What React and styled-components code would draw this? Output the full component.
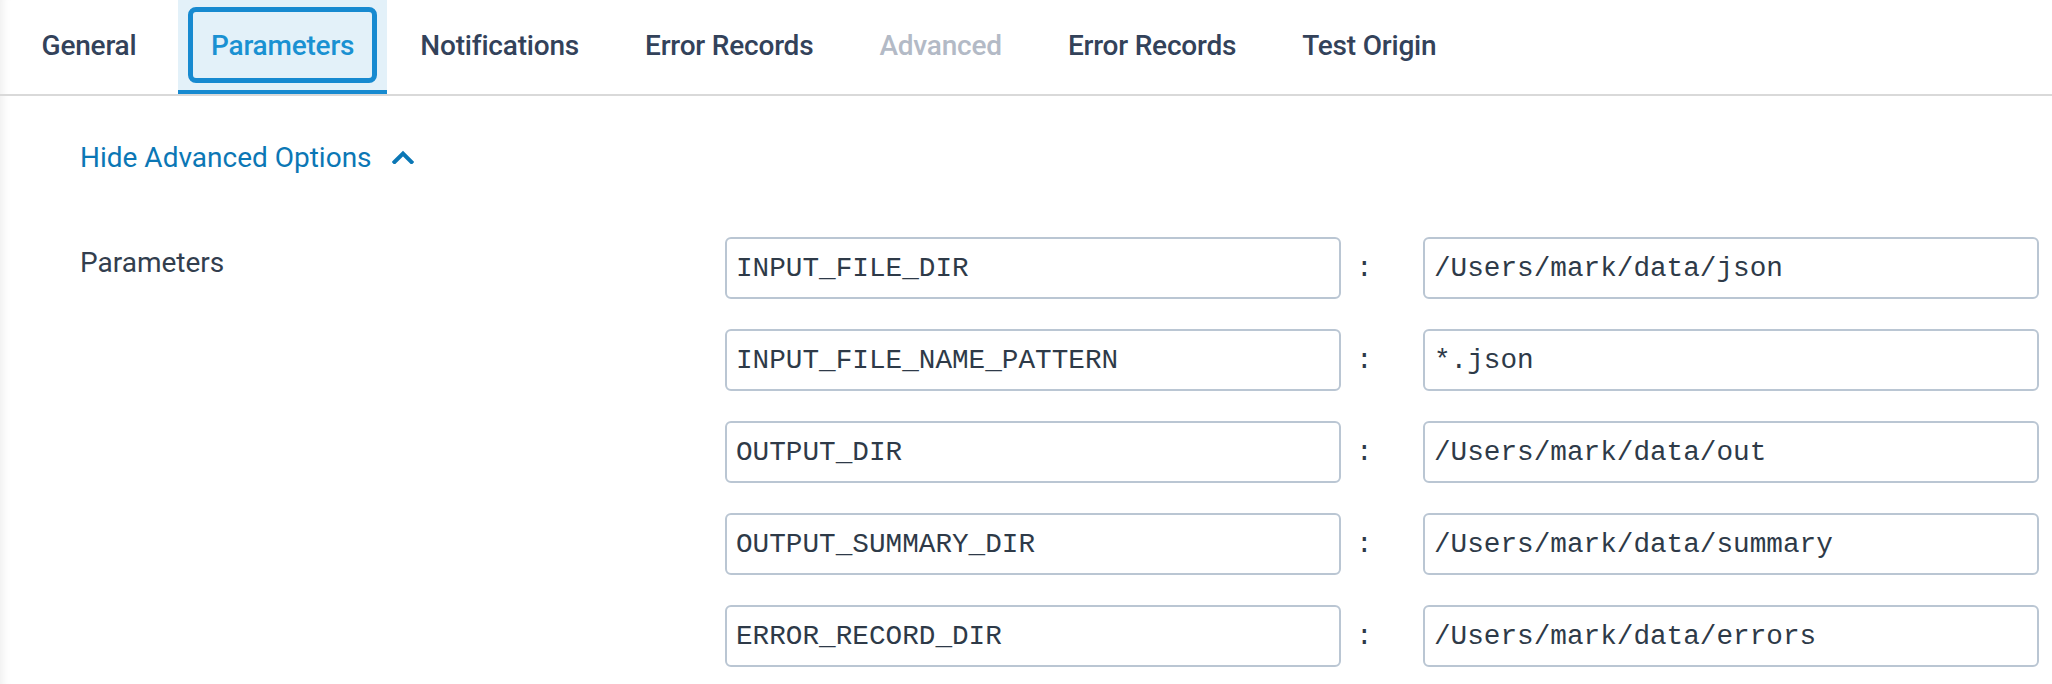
import React from "react";
import styled, { createGlobalStyle } from "styled-components";

const GlobalStyle = createGlobalStyle`
  * {
    box-sizing: border-box;
  }
  body {
    margin: 0;
    background: #ffffff;
    font-family: Roboto, "Noto Sans", sans-serif;
  }
`;

const TABS = [
  { label: "General" },
  { label: "Parameters", active: true },
  { label: "Notifications" },
  { label: "Error Records" },
  { label: "Advanced", disabled: true },
  { label: "Error Records" },
  { label: "Test Origin" },
];

const PARAMS = [
  { key: "INPUT_FILE_DIR", value: "/Users/mark/data/json" },
  { key: "INPUT_FILE_NAME_PATTERN", value: "*.json" },
  { key: "OUTPUT_DIR", value: "/Users/mark/data/out" },
  { key: "OUTPUT_SUMMARY_DIR", value: "/Users/mark/data/summary" },
  { key: "ERROR_RECORD_DIR", value: "/Users/mark/data/errors" },
];

const ChevronUp = () => (
  <svg width="22" height="14" viewBox="0 0 22 14" fill="none">
    <path
      d="M2.5 12L11 3.5L19.5 12"
      stroke="#0b77b5"
      strokeWidth="4"
      strokeLinecap="square"
    />
  </svg>
);

const App = () => {
  return (
    <Page>
      <GlobalStyle />
      <TabBar>
        {TABS.map((tab, index) => (
          <Tab key={index} $active={tab.active} $disabled={tab.disabled}>
            {tab.label}
          </Tab>
        ))}
      </TabBar>
      <Content>
        <Toggle>
          <span>Hide Advanced Options</span>
          <ChevronUp />
        </Toggle>
        <ParamSection>
          <ParamLabel>Parameters</ParamLabel>
          <ParamList>
            {PARAMS.map((p) => (
              <ParamRow key={p.key}>
                <Field readOnly value={p.key} />
                <Colon>:</Colon>
                <Field readOnly value={p.value} />
              </ParamRow>
            ))}
          </ParamList>
        </ParamSection>
      </Content>
    </Page>
  );
};
export default App;

const Page = styled.div`
  width: 2052px;
  height: 684px;
  overflow: hidden;
  background: #ffffff;
  box-shadow: inset 10px 0 10px -8px rgba(0, 0, 0, 0.08);
`;

const TabBar = styled.div`
  display: flex;
  align-items: stretch;
  height: 96px;
  border-bottom: 2px solid #d9d9d9;
`;

const Tab = styled.div`
  position: relative;
  display: flex;
  align-items: center;
  justify-content: center;
  min-width: 178px;
  padding: 0 33px;
  border-bottom: 4px solid ${(p) => (p.$active ? "#178ad0" : "transparent")};
  background: ${(p) => (p.$active ? "#e3f1f9" : "transparent")};
  color: ${(p) =>
    p.$active ? "#1a91d2" : p.$disabled ? "#b3bac6" : "#33425a"};
  font-size: 28px;
  font-weight: 500;
  letter-spacing: -0.2px;
  white-space: nowrap;
  &::after {
    content: "";
    display: ${(p) => (p.$active ? "block" : "none")};
    position: absolute;
    top: 7px;
    left: 10px;
    right: 10px;
    bottom: 7px;
    border: 5px solid #178ad0;
    border-radius: 8px;
  }
`;

const Content = styled.div`
  padding: 45px 13px 0 80px;
`;

const Toggle = styled.div`
  display: flex;
  align-items: center;
  gap: 20px;
  height: 33px;
  color: #0b77b5;
  font-size: 28px;
  line-height: 33px;
  svg {
    margin-top: -2px;
  }
`;

const ParamSection = styled.div`
  display: grid;
  grid-template-columns: 645px 1fr;
  margin-top: 63px;
`;

const ParamLabel = styled.div`
  padding-top: 9px;
  color: #323e4e;
  font-size: 28px;
  line-height: 33px;
`;

const ParamList = styled.div`
  display: flex;
  flex-direction: column;
  gap: 30px;
`;

const ParamRow = styled.div`
  display: grid;
  grid-template-columns: 616px 82px 616px;
  align-items: center;
`;

const Field = styled.input`
  height: 62px;
  width: 100%;
  padding: 0 9px;
  border: 2px solid #bac6d3;
  border-radius: 6px;
  background: #ffffff;
  color: #2e3a48;
  font-family: "Liberation Mono", "Courier New", monospace;
  font-size: 27.7px;
  outline: none;
`;

const Colon = styled.div`
  padding-left: 15px;
  color: #2e3a48;
  font-family: "Liberation Mono", "Courier New", monospace;
  font-size: 27.7px;
`;
